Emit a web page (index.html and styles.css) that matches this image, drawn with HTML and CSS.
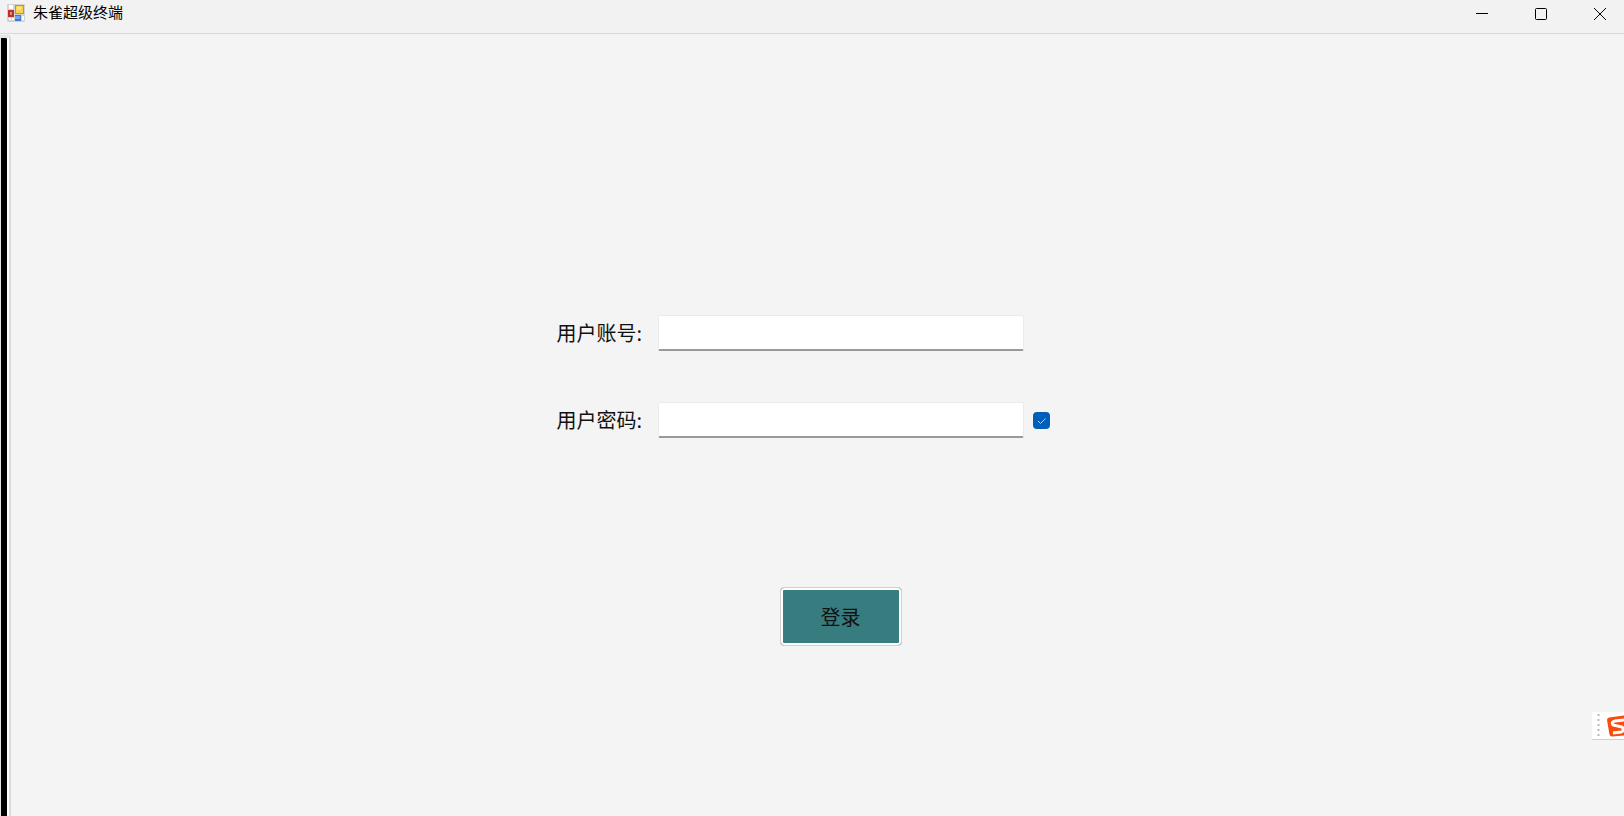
FILE: index.html
```
<!DOCTYPE html>
<html lang="zh">
  <head>
    <meta charset="utf-8">
    <meta name="viewport" content="width=device-width, initial-scale=1">
    <title>朱雀超级终端</title>
    <link rel="stylesheet" href="styles.css">
  </head>
  <body>
    <header class="titlebar">
      <svg class="app-icon" width="18" height="18" viewBox="0 0 18 18" aria-hidden="true">
        <rect width="18" height="18" rx="1" fill="#d2d2d2"/>
        <rect x="2" y="1" width="4" height="4" fill="#fff"/>
        <rect x="2" y="14" width="2" height="2" fill="#fff"/>
        <rect x="5" y="14" width="2" height="2" fill="#fff"/>
        <rect x="15" y="12" width="2" height="4" fill="#fff"/>
        <rect x="1" y="6" width="6" height="7" fill="#b83227"/>
        <rect x="3" y="8" width="2" height="3" fill="#e8897c"/>
        <rect x="8" y="1" width="9" height="9" fill="#c99a10"/>
        <rect x="9" y="2" width="7" height="7" fill="#fcd24a"/>
        <rect x="10" y="3" width="4" height="3" fill="#ffe78c"/>
        <rect x="8" y="11" width="6" height="6" fill="#3f76d8"/>
        <rect x="8" y="12" width="5" height="3" fill="#76a5f2"/>
      </svg>
      <h1>朱雀超级终端</h1>
      <div class="window-buttons">
        <button type="button" aria-label="最小化">
          <svg width="12" height="12" viewBox="0 0 12 12"><path d="M0 5.500h12"/></svg>
        </button>
        <button type="button" aria-label="最大化">
          <svg width="12" height="12" viewBox="0 0 12 12"><rect x=".5" y=".5" width="11" height="11" rx="1"/></svg>
        </button>
        <button type="button" aria-label="关闭">
          <svg width="12" height="12" viewBox="0 0 12 12"><path d="M0 0l12 12M12 0L0 12"/></svg>
        </button>
      </div>
    </header>
    <div class="window">
      <div class="side"></div>
      <main>
        <form class="login">
          <label for="account">用户账号:</label>
          <input id="account" class="field" type="text">
          <label for="password">用户密码:</label>
          <input id="password" class="field" type="password">
          <input class="check" type="checkbox" aria-label="记住密码" checked>
          <button class="submit" type="button">登录</button>
        </form>
      </main>
    </div>
    <div class="ime">
      <svg width="32" height="28" viewBox="0 0 32 28" aria-hidden="true">
        <path d="M6.500 2v24" stroke="#b9b9b9" stroke-width="2" stroke-dasharray="2 3"/>
        <path d="M0 27.500h32" stroke="#cfcfcf"/>
        <path d="M15 8q0-2 2-2.500l15-2v20l-12 1q-2 0-2.500-2z" fill="#fa4b0c"/>
        <path d="M32 8l-9 1q-4 1-2 4l9 2q3 4-1 5l-8 1" fill="none" stroke="#fff" stroke-width="3"/>
      </svg>
    </div>
  </body>
</html>
```

FILE: styles.css
```
body {
  margin: 0;
  min-height: 100vh;
  display: flex;
  flex-direction: column;
  background: #f4f4f4;
  color: #111;
  font-family: "Noto Sans CJK SC", sans-serif;
}

.titlebar {
  display: flex;
  height: 33px;
  padding-left: 7px;
  border-bottom: 1px solid #d9d9d9;
  background: #f2f2f2;
}

.app-icon {
  margin-top: 4px;
}

h1 {
  margin: 0 0 0 8px;
  font-size: 15px;
  font-weight: normal;
  line-height: 24px;
  color: #000;
}

.window-buttons {
  display: flex;
  gap: 11px;
  margin-left: auto;
  height: 28px;
}

.window-buttons button {
  display: flex;
  align-items: center;
  justify-content: center;
  width: 48px;
  padding: 0;
  border: 0;
  background: none;
}

.window-buttons svg {
  fill: none;
  stroke: #000;
}

.window {
  flex: 1;
  display: flex;
}

.side {
  width: 6px;
  margin-top: 1px;
  border: 1px solid #e6e6e6;
  border-width: 3px 0 0 1px;
  border-right: 2px solid #fff;
  border-top-right-radius: 4px;
  box-shadow: 2px 0 #dadada;
  background: #000;
}

main {
  flex: 1;
  padding: 281px 27px 0 0;
}

.login {
  display: grid;
  grid-template-columns: 101px 366px 26px;
  row-gap: 51px;
  justify-content: center;
  align-items: center;
}

label {
  grid-column: 1;
  font-size: 20px;
  line-height: 36px;
}

.field {
  box-sizing: border-box;
  width: 100%;
  height: 36px;
  padding: 0 6px;
  border: 1px solid #ebebeb;
  border-bottom: 2px solid #999;
  border-radius: 2px;
  background: #fff;
  font: inherit;
  font-size: 20px;
}

.check {
  appearance: none;
  width: 17px;
  height: 17px;
  margin: 0;
  justify-self: end;
  border-radius: 4px;
  background: #005fb8;
}

.check:checked {
  background: #005fb8 url("data:image/svg+xml,%3Csvg xmlns='http://www.w3.org/2000/svg' viewBox='0 0 17 17'%3E%3Cpath d='M5 9l2.500 2.500 5-5' fill='none' stroke='%23b5d3ef'/%3E%3C/svg%3E") center / 17px;
}

.submit {
  grid-column: 2;
  justify-self: center;
  width: 122px;
  height: 59px;
  margin-top: 98px;
  padding: 0;
  border: 1px solid #d0d0d0;
  border-radius: 4px;
  box-shadow: inset 0 0 0 2px #fff;
  background: #377d7f;
  color: #111;
  font: inherit;
  font-size: 20px;
}

/* input method bar, docked over the right edge */
.ime {
  position: absolute;
  top: 712px;
  right: 0;
  background: #fff;
}

.ime svg {
  display: block;
}
```
